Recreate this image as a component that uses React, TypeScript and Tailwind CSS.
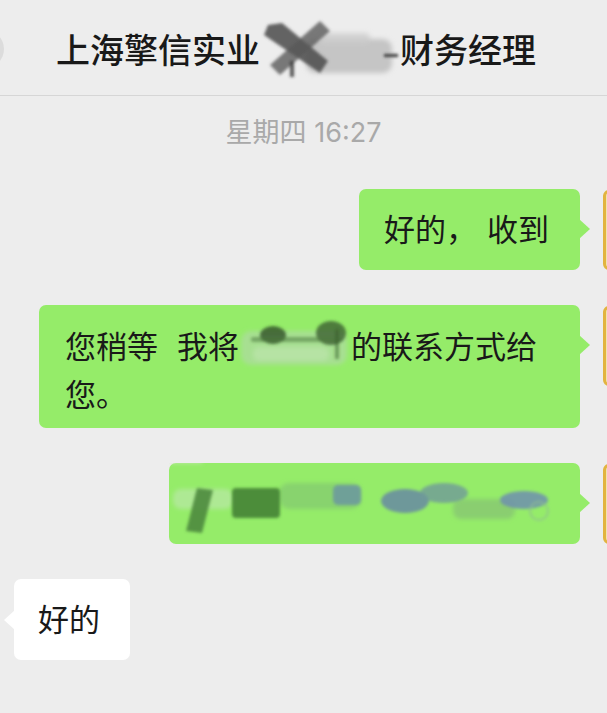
import React from "react";

const FONT = "font-['Inter','Noto_Sans_CJK_SC',sans-serif]";

const Avatar = () => (
  <div className="mr-[-76px] mt-[1px] h-[80px] w-[80px] shrink-0 rounded-[6px] border-[3px] border-[#e2b43f] bg-[#f1e2b1]" />
);

const RightRow = ({ children }: { children: React.ReactNode }) => (
  <div className="flex items-start justify-end gap-[23px]">
    {children}
    <Avatar />
  </div>
);

const GreenBubble = ({ children, className = "" }: { children: React.ReactNode; className?: string }) => (
  <div className={`relative rounded-[7px] bg-[#95ec69] text-[31px] text-[#191919] ${className}`}>
    {children}
    <span className="absolute right-[-10px] top-[30px] h-0 w-0 border-y-[10px] border-l-[11px] border-y-transparent border-l-[#95ec69]" />
  </div>
);

const TitleSmudge = () => (
  <svg width="136" height="60" viewBox="0 0 136 60" className="mx-[2px] shrink-0 overflow-visible">
    <defs>
      <filter id="tb" x="-20%" y="-20%" width="140%" height="140%">
        <feGaussianBlur stdDeviation="1.6" />
      </filter>
      <filter id="tb2" x="-20%" y="-20%" width="140%" height="140%">
        <feGaussianBlur stdDeviation="2.5" />
      </filter>
    </defs>
    <g filter="url(#tb2)">
      <rect x="44" y="18" width="86" height="34" rx="9" fill="#bdbdbd" opacity="0.85" />
      <rect x="58" y="12" width="50" height="12" rx="5" fill="#cccccc" opacity="0.8" />
    </g>
    <g filter="url(#tb)">
      <path d="M6 4 L20 2 L66 40 L58 52 L2 14 Z" fill="#4a4a4a" opacity="0.85" />
      <path d="M58 0 L68 10 L18 54 L8 44 Z" fill="#5a5a5a" opacity="0.8" />
      <rect x="122" y="33" width="14" height="3" fill="#3a3a3a" />
      <rect x="28" y="40" width="4" height="16" fill="#333333" opacity="0.8" />
    </g>
  </svg>
);

const InlineSmudge = () => (
  <svg width="112" height="48" viewBox="0 0 112 48" className="inline-block overflow-visible align-top">
    <defs>
      <filter id="ib" x="-20%" y="-30%" width="140%" height="160%">
        <feGaussianBlur stdDeviation="2" />
      </filter>
      <filter id="ib2" x="-20%" y="-30%" width="140%" height="160%">
        <feGaussianBlur stdDeviation="1.8" />
      </filter>
    </defs>
    <g filter="url(#ib)">
      <rect x="2" y="8" width="106" height="34" rx="10" fill="#a9de96" opacity="0.9" />
      <rect x="14" y="24" width="76" height="14" rx="6" fill="#b7e3a6" opacity="0.9" />
    </g>
    <g filter="url(#ib2)">
      <ellipse cx="34" cy="12" rx="13" ry="9" fill="#2e4f27" opacity="0.8" />
      <ellipse cx="92" cy="10" rx="15" ry="12" fill="#34552c" opacity="0.75" />
      <rect x="12" y="14" width="92" height="5" rx="2" fill="#4d7a3e" opacity="0.55" />
      <rect x="96" y="6" width="4" height="30" fill="#345a2c" opacity="0.5" />
    </g>
  </svg>
);

const NumberSmudge = () => (
  <svg width="411" height="81" viewBox="0 0 411 81" className="block">
    <defs>
      <filter id="nb" x="-10%" y="-30%" width="120%" height="160%">
        <feGaussianBlur stdDeviation="2.2" />
      </filter>
      <filter id="nb2" x="-10%" y="-30%" width="120%" height="160%">
        <feGaussianBlur stdDeviation="1.4" />
      </filter>
    </defs>
    <g filter="url(#nb)">
      <rect x="4" y="26" width="60" height="20" rx="8" fill="#b9e8a6" opacity="0.7" />
      <rect x="110" y="20" width="82" height="26" rx="10" fill="#82c870" opacity="0.7" />
      <rect x="284" y="36" width="62" height="20" rx="8" fill="#84c274" opacity="0.7" />
      <rect x="0" y="-6" width="34" height="6" rx="3" fill="#cfe9c2" opacity="0.8" />
    </g>
    <g filter="url(#nb2)">
      <path d="M28 25 L44 27 L33 70 L17 68 Z" fill="#4e8a3e" opacity="0.9" />
      <rect x="63" y="25" width="48" height="30" rx="4" fill="#417c32" opacity="0.85" />
      <rect x="164" y="22" width="28" height="20" rx="5" fill="#6b97a0" opacity="0.85" />
      <ellipse cx="236" cy="38" rx="24" ry="12" fill="#6a8fa0" opacity="0.9" />
      <ellipse cx="275" cy="30" rx="24" ry="10" fill="#6f9a98" opacity="0.8" />
      <ellipse cx="355" cy="37" rx="24" ry="9" fill="#6f8fae" opacity="0.85" />
      <circle cx="370" cy="48" r="9" fill="none" stroke="#8fbf90" strokeWidth="2" opacity="0.7" />
    </g>
  </svg>
);

export default function App() {
  return (
    <div className={`relative h-[713px] w-[607px] overflow-hidden bg-[#ededed] ${FONT}`}>
      <header className="relative flex h-[96px] items-center border-b border-[#d6d6d6] pl-[56px] pt-[6px]">
        <span className="absolute left-[-34px] top-[30px] h-[38px] w-[38px] rounded-full bg-[#dcdcdc]" />
        <div className="flex items-center text-[34px] font-medium leading-none text-[#191919]">
          <span>上海擎信实业</span>
          <TitleSmudge />
          <span>财务经理</span>
        </div>
      </header>

      <div className="mt-[16px] text-center text-[27px] leading-[42px] text-[#a9a9a9]">星期四 16:27</div>

      <div className="mt-[35px] flex flex-col gap-[35px]">
        <RightRow>
          <GreenBubble className="pb-[17px] pl-[25px] pr-[31px] pt-[18px] leading-[46px]">
            好的，<span className="ml-[10px]">收到</span>
          </GreenBubble>
        </RightRow>

        <RightRow>
          <GreenBubble className="w-[541px] pb-[9px] pl-[26px] pr-[24px] pt-[18px] leading-[48px]">
            您稍等<span className="inline-block w-[19px]" />我将
            <InlineSmudge />
            的联系方式给
            <br />
            您。
          </GreenBubble>
        </RightRow>

        <RightRow>
          <GreenBubble className="h-[81px] w-[411px]">
            <NumberSmudge />
          </GreenBubble>
        </RightRow>

        <div className="flex pl-[14px]">
          <div className="relative rounded-[7px] bg-white pb-[17px] pl-[24px] pr-[30px] pt-[18px] text-[31px] leading-[46px] text-[#191919]">
            好的
            <span className="absolute left-[-10px] top-[31px] h-0 w-0 border-y-[10px] border-r-[11px] border-y-transparent border-r-white" />
          </div>
        </div>
      </div>
    </div>
  );
}
